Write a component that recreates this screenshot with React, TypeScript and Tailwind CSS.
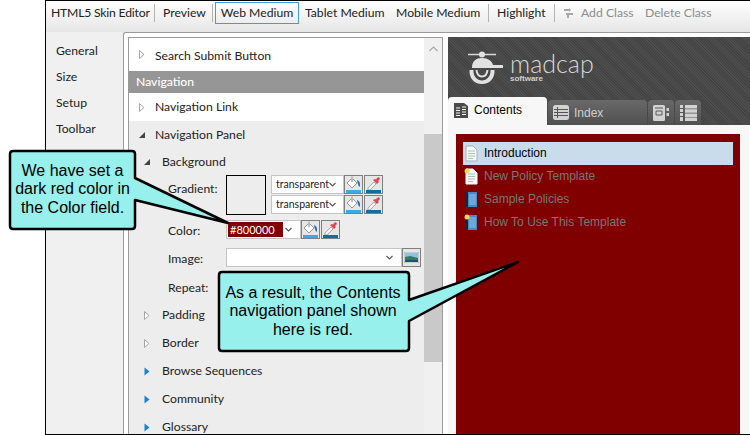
const ui = "font-['Lato',sans-serif]";
const web = "font-['Liberation_Sans',Arial,sans-serif]";

const Arrow = ({ kind }: { kind: "closed" | "open" | "blue" }) => {
  if (kind === "open") {
    return (
      <svg width="8" height="8" viewBox="0 0 8 8">
        <path d="M7 1V7H1Z" fill="#444" />
      </svg>
    );
  }
  if (kind === "blue") {
    return (
      <svg width="6" height="9" viewBox="0 0 6 9">
        <path d="M0.5 0.5L5.5 4.5L0.5 8.5Z" fill="#1383d4" />
      </svg>
    );
  }
  return (
    <svg width="6" height="9" viewBox="0 0 6 9">
      <path d="M0.5 0.5L5 4.5L0.5 8.5Z" fill="#fff" stroke="#a6a6a6" />
    </svg>
  );
};

const Chevron = ({ color = "#555" }: { color?: string }) => (
  <svg width="7" height="5" viewBox="0 0 7 5" className="shrink-0">
    <path d="M0.5 1L3.5 4L6.5 1" fill="none" stroke={color} strokeWidth="1.1" />
  </svg>
);

const BucketButton = () => (
  <div className="w-[19px] h-[19px] border border-[#7f7f7f] bg-[#e6e6e6] flex items-center justify-center shrink-0">
    <svg width="17" height="17" viewBox="0 0 17 17">
      <path d="M2 7L7 2L12 7L7 12Z" fill="#fff" stroke="#999" />
      <path d="M6 0.500H8V6H6Z" fill="#bbb" />
      <path d="M12 4C14.500 5 16 8 14.500 11C13 9.500 12.500 7 12 4Z" fill="#2f6fb8" />
      <path d="M1 14H16V17H1Z" fill="#39aae8" />
    </svg>
  </div>
);

const DropperButton = () => (
  <div className="w-[19px] h-[19px] border border-[#7f7f7f] bg-[#e6e6e6] flex items-center justify-center shrink-0">
    <svg width="17" height="17" viewBox="0 0 17 17">
      <path d="M3 12L9 6L11 8L5 14H3Z" fill="#f4f4f4" stroke="#a9a9a9" />
      <path d="M8 4L10 6L12 8L14 6L13 5L15 3L14 1L12 2L11 3.500L10 3Z" fill="#e8414f" />
      <path d="M1 14H16V17H1Z" fill="#0f6f9e" />
    </svg>
  </div>
);

const Select = ({ text }: { text: string }) => (
  <div className="w-[73px] h-[19px] bg-white border border-[#c4c4c4] flex items-center justify-between pl-1 pr-2 shrink-0">
    <span className="text-[10.500px] text-[#222] leading-none whitespace-nowrap">{text}</span>
    <Chevron />
  </div>
);

const Row = ({
  label,
  arrow,
  indent,
  h = "h-[28px]",
  bg = "",
  textClass = "pt-[1px]",
}: {
  label: string;
  arrow: "closed" | "open" | "blue";
  indent?: boolean;
  h?: string;
  bg?: string;
  textClass?: string;
}) => (
  <div className={`flex items-center ${h} ${bg} ${indent ? "pl-[14px]" : "pl-[9px]"}`}>
    <span className={`w-[8px] flex justify-center ${indent ? "mr-[11px]" : "mr-[9px]"}`}>
      <Arrow kind={arrow} />
    </span>
    <span className={`text-[12.200px] text-[#222] whitespace-nowrap ${textClass}`}>{label}</span>
  </div>
);

const Sep = () => <div className="w-px h-[18px] bg-[#b4b4b4] shrink-0" />;

const TreePanel = () => (
  <div className={`w-[315px] h-full border-l border-r border-t border-[#9a9a9a] flex ${ui}`}>
    <div className="w-[296px] bg-[#ededed] overflow-hidden">
      <Row label="Search Submit Button" arrow="closed" h="h-[33px]" bg="bg-white" textClass="pt-[4px]" />
      <div className="h-[22px] bg-[#969696] text-white text-[12.200px] font-medium pl-[7px] flex items-center">
        Navigation
      </div>
      <Row label="Navigation Link" arrow="closed" bg="bg-white" textClass="" />
      <Row label="Navigation Panel" arrow="open" h="h-[27px]" textClass="pt-[2px]" />
      <div className="flex items-center h-[27px] pl-[14px]">
        <span className="w-[8px] flex justify-center mr-[11px]">
          <Arrow kind="open" />
        </span>
        <span className="text-[12.200px] text-[#222] pt-[2px]">Background</span>
      </div>
      <div className="flex h-[41px] pl-[39px]">
        <span className="w-[58px] text-[12.200px] text-[#222] leading-[28px]">Gradient:</span>
        <div className="w-[40px] h-[40px] border border-black mr-[5px] shrink-0" />
        <div className="flex flex-col gap-px">
          <div className="flex">
            <Select text="transparent" />
            <BucketButton />
            <div className="w-px" />
            <DropperButton />
          </div>
          <div className="flex">
            <Select text="transparent" />
            <BucketButton />
            <div className="w-px" />
            <DropperButton />
          </div>
        </div>
      </div>
      <div className="flex items-center h-[19px] mt-[4px] pl-[39px]">
        <span className="w-[58px] text-[12.200px] text-[#222] pt-[3px]">Color:</span>
        <div className="w-[75px] h-[19px] bg-white border border-[#c4c4c4] flex items-center justify-between pr-2">
          <span className="w-[55px] h-[15px] ml-px bg-[#800000] text-white text-[11px] leading-[15px] pl-[2px]">
            #800000
          </span>
          <Chevron />
        </div>
        <BucketButton />
        <div className="w-px" />
        <DropperButton />
      </div>
      <div className="flex items-center h-[19px] mt-[9px] pl-[39px]">
        <span className="w-[58px] text-[12.200px] text-[#222] pt-[3px]">Image:</span>
        <div className="w-[176px] h-[19px] bg-white border border-[#c4c4c4] flex items-center justify-end pr-2">
          <Chevron />
        </div>
        <div className="w-[19px] h-[19px] border border-[#7f7f7f] bg-[#e6e6e6] flex items-center justify-center">
          <svg width="15" height="11" viewBox="0 0 15 11">
            <path d="M0 0H15V11H0Z" fill="#fff" stroke="#999" />
            <path d="M1 1H14V6H1Z" fill="#8fc1e3" />
            <path d="M1 5L6 4L14 6V8H1Z" fill="#2f7d5c" />
            <path d="M1 8H14V10H1Z" fill="#1f4f7a" />
          </svg>
        </div>
      </div>
      <div className="flex items-center h-[28px] mt-[6px] pl-[39px] pt-[2px] text-[12.200px] text-[#222]">Repeat:</div>
      <Row label="Padding" arrow="closed" indent />
      <Row label="Border" arrow="closed" indent />
      <Row label="Browse Sequences" arrow="blue" indent />
      <Row label="Community" arrow="blue" indent />
      <Row label="Glossary" arrow="blue" indent />
    </div>
    <div className="w-[18px] bg-[#f0f0f0] flex flex-col items-center">
      <div className="h-[22px] flex items-center">
        <svg width="9" height="6" viewBox="0 0 9 6">
          <path d="M0.5 5L4.5 1L8.5 5" fill="none" stroke="#a6a6a6" strokeWidth="1.1" />
        </svg>
      </div>
      <div className="w-full h-[74px]" />
      <div className="w-full h-[228px] bg-[#c9c9c9]" />
    </div>
  </div>
);

const Logo = () => (
  <div className="flex items-start h-[60px] pt-[13px] pl-[20px]">
    <svg width="40" height="36" viewBox="0 0 40 36" className="shrink-0">
      <path d="M0 4.500H12M16 4.500H28" stroke="#d9d9d9" strokeWidth="1.600" />
      <circle cx="14" cy="4.500" r="3" fill="#e2e2e2" />
      <path d="M4 18C4 11 8 8 14 8C20 8 24 11 25 15H35V18Z" fill="#e2e2e2" />
      <path d="M1.500 20C1 28 6 34 14 34C22 34 27 28 26.500 20H22.500C23 26 19 30.500 14 30.500C9 30.500 5 26 5.500 20Z" fill="#e2e2e2" />
      <path d="M8.500 20C9 24.500 11 26.500 14 26.500C17 26.500 19 24.500 19.500 20" fill="none" stroke="#e2e2e2" strokeWidth="2" />
    </svg>
    <div className="ml-[2px] mt-[4px] flex flex-col">
      <span className="font-['Lato',sans-serif] font-light text-[25px] leading-[19px] text-[#d8d8d8]">
        madcap
      </span>
      <span className={`${web} font-bold text-[8px] leading-[7px] mt-[2px] text-[#d0d0d0]`}>software</span>
    </div>
  </div>
);

const DocIcon = ({ star }: { star?: boolean }) => (
  <svg width="14" height="17" viewBox="0 0 14 17">
    <path d="M2 1H9L13 5V16H2Z" fill="#f7f7f5" stroke={star ? "#f7f7f5" : "#9fb3c2"} />
    <path d="M4 6H11M4 8.500H11M4 11H11M4 13.500H9" stroke="#a9c3b4" strokeWidth="1" />
    {star && <circle cx="3" cy="3" r="2.500" fill="#f0d65a" />}
  </svg>
);

const BookIcon = ({ star }: { star?: boolean }) => (
  <svg width="14" height="17" viewBox="0 0 14 17">
    <path d="M2 1H13V16H2Z" fill="#4a87c6" />
    <path d="M2 1H4V16H2Z" fill="#17243a" />
    <path d="M5 3H12V14H5Z" fill="#6fa5d8" />
    {star && <circle cx="3" cy="3" r="2.500" fill="#f0d65a" />}
  </svg>
);

const Preview = () => (
  <div className={`flex-1 h-full flex flex-col ${web}`}>
    <div className="h-[88px] bg-[repeating-linear-gradient(45deg,#4e4e4e_0px,#4e4e4e_1px,#434343_1px,#434343_2px)] relative flex flex-col">
      <Logo />
      <div className="flex items-end h-[28px]">
        <div className="w-[99px] h-[28px] bg-[#f7f7f7] rounded-t-[4px] flex items-start pt-[5px] pl-[6px] gap-[6px]">
          <svg width="14" height="16" viewBox="0 0 14 16">
            <path d="M0 1H10L14 4V16H0Z" fill="#4a4a4a" />
            <path d="M2 6H6M2 8.500H6M2 11H6M2 13.500H6M8 5H12M8 7.500H12M8 10H12M8 12.500H12" stroke="#f7f7f7" />
          </svg>
          <span className="text-[12px] text-black leading-[16px]">Contents</span>
        </div>
        <div className="w-[99px] h-[25px] ml-px bg-gradient-to-b from-[#696969] to-[#505050] rounded-t-[4px] flex items-center pl-[5px] gap-[5px]">
          <svg width="16" height="15" viewBox="0 0 16 15">
            <rect width="16" height="15" rx="2.500" fill="#d2d2d2" />
            <path d="M1 4.500H15M1 7.500H15M1 10.500H15M4.500 2V13" stroke="#555" />
          </svg>
          <span className="text-[12px] text-[#cfcfcf]">Index</span>
        </div>
        <div className="w-[26px] h-[25px] ml-px bg-gradient-to-b from-[#696969] to-[#505050] rounded-t-[4px] flex items-center justify-center">
          <svg width="16" height="16" viewBox="0 0 16 16">
            <rect width="12" height="16" rx="1.500" fill="#d2d2d2" />
            <path d="M13.500 3H16V6H13.500ZM13.500 8H16V11H13.500Z" fill="#d2d2d2" />
            <path d="M2 3H10M3 6H9V10H3Z" fill="none" stroke="#5a5a5a" />
          </svg>
        </div>
        <div className="w-[26px] h-[25px] ml-px bg-gradient-to-b from-[#696969] to-[#505050] rounded-t-[4px] flex items-center justify-center">
          <svg width="17" height="16" viewBox="0 0 17 16">
            <path d="M0 0H3V16H0ZM5 0H17V3.500H5ZM5 4.200H17V7.700H5ZM5 8.400H17V11.900H5ZM5 12.600H17V16H5Z" fill="#d2d2d2" />
            <path d="M0 3.500H3M0 7.500H3M0 11.500H3" stroke="#555" />
          </svg>
        </div>
      </div>
    </div>
    <div className="flex-1 bg-[#f7f7f7] pt-[9px] pl-[8px] pr-[9px] border-r border-white">
      <div className="h-[400px] bg-[#800000] pt-[8px] px-[7px] text-[12px]">
        <div className="h-[23px] bg-[#c9dcec] flex items-center pl-[1px] gap-[6px] text-black">
          <DocIcon />
          <span className="-mt-[2px]">Introduction</span>
        </div>
        <div className="h-[23px] flex items-center pl-[1px] gap-[6px] text-[#777]">
          <DocIcon star />
          <span className="-mt-[2px]">New Policy Template</span>
        </div>
        <div className="h-[23px] flex items-center pl-[1px] gap-[6px] text-[#777]">
          <BookIcon />
          <span className="-mt-[2px]">Sample Policies</span>
        </div>
        <div className="h-[23px] flex items-center pl-[1px] gap-[6px] text-[#777]">
          <BookIcon star />
          <span className="-mt-[2px]">How To Use This Template</span>
        </div>
      </div>
    </div>
  </div>
);

const Callouts = () => (
  <>
    <svg width="750" height="435" viewBox="0 0 750 435" className="absolute inset-0 pointer-events-none">
      <path
        d="M13 151H132Q135 151 135 154V178L228 223L135 200V226Q135 229 132 229H13Q10 229 10 226V154Q10 151 13 151Z"
        fill="#97f0ec"
        stroke="#000"
        strokeWidth="2.500"
        strokeLinejoin="round"
      />
      <path
        d="M222 272H406Q409 272 409 275V300L518 262L409 321V348Q409 351 406 351H222Q219 351 219 348V275Q219 272 222 272Z"
        fill="#97f0ec"
        stroke="#000"
        strokeWidth="2.500"
        strokeLinejoin="round"
      />
    </svg>
    <div className={`absolute left-[10px] top-[162px] w-[125px] text-center text-[16px] leading-[18.400px] text-black ${web}`}>
      We have set a
      <br />
      dark red color in
      <br />
      the Color field.
    </div>
    <div className={`absolute left-[218px] top-[284px] w-[190px] text-center text-[16px] leading-[18.400px] text-black ${web}`}>
      As a result, the Contents
      <br />
      navigation panel shown
      <br />
      here is red.
    </div>
  </>
);

export default function App() {
  return (
    <div className="relative w-[750px] h-[435px] bg-white overflow-hidden">
      <div className={`ml-[45px] h-full border-l border-t border-b border-black flex flex-col ${ui}`}>
        <div className="h-[31px] shrink-0 bg-gradient-to-b from-white to-[#e6e6e6] flex items-start pt-[1px] pl-[5px] text-[12.200px] text-[#222]">
          <div className="h-[22px] flex items-center whitespace-nowrap">
            <span className="w-[98px] tracking-[-0.2px]">HTML5 Skin Editor</span>
            <div className="ml-[5px]"><Sep /></div>
            <span className="ml-[8px] w-[41px]">Preview</span>
            <div className="ml-[8px]"><Sep /></div>
            <div className="ml-[2px] w-[84px] h-[22px] border border-[#3d9be9] flex items-center justify-center">
              Web Medium
            </div>
            <span className="ml-[6px] w-[80px]">Tablet Medium</span>
            <span className="ml-[11px] w-[84px]">Mobile Medium</span>
            <div className="ml-[8px]"><Sep /></div>
            <span className="ml-[8px] w-[49px]">Highlight</span>
            <div className="ml-[8px]"><Sep /></div>
            <svg width="12" height="12" viewBox="0 0 12 12" className="ml-[8px]">
              <path d="M1 2H6V1L8 3L6 5V4H1ZM3 6H10V8H6V11H4V8H3Z" fill="#a8a8a8" />
            </svg>
            <span className="ml-[6px] w-[52px] text-[#8c8c8c]">Add Class</span>
            <span className="ml-[12px] text-[#8c8c8c]">Delete Class</span>
          </div>
        </div>
        <div className="flex-1 flex bg-[#f0f0f0] min-h-0">
          <div className="w-[77px] shrink-0 flex flex-col pt-[6px] pl-[10px] text-[12.200px] text-[#222]">
            <span className="h-[26px] leading-[26px]">General</span>
            <span className="h-[26px] leading-[26px]">Size</span>
            <span className="h-[26px] leading-[26px]">Setup</span>
            <span className="h-[26px] leading-[26px]">Toolbar</span>
          </div>
          <div className="flex-1 border-l border-t border-[#9a9a9a] rounded-tl-[3px] bg-white pl-[4px] pt-[4px] flex gap-[5px] min-w-0 overflow-hidden">
            <TreePanel />
            <Preview />
          </div>
        </div>
      </div>
      <Callouts />
    </div>
  );
}
